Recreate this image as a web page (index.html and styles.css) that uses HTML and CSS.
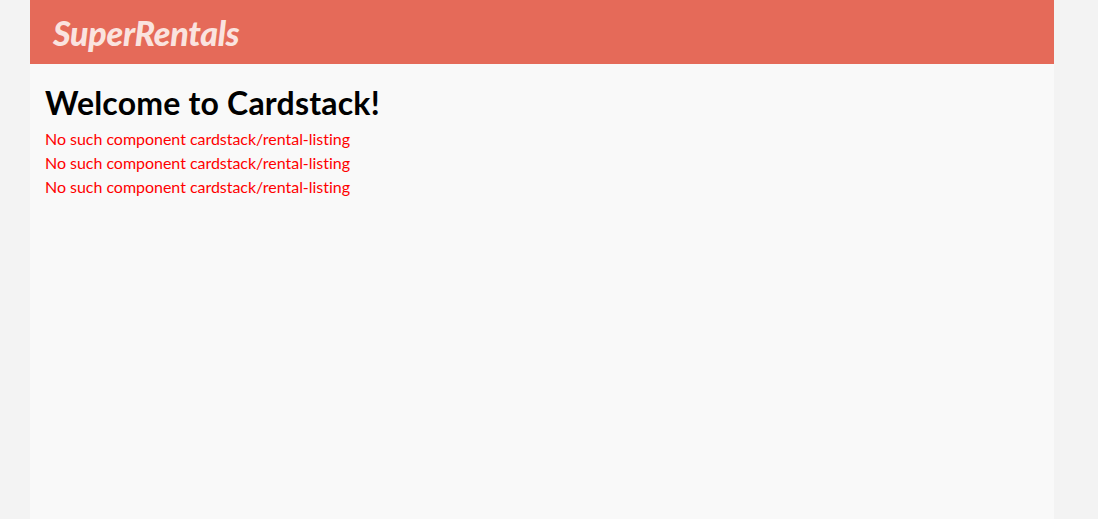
FILE: index.html
```html
<!DOCTYPE html>
<html lang="en">

<head>
    <meta charset="UTF-8">
    <title>SuperRentals</title>
    <link rel="stylesheet" href="styles.css">
</head>

<body>
    <div class="container">
        <div class="menu">
            <a class="brand" href="#">SuperRentals</a>
        </div>
        <div class="body">
            <h2>Welcome to Cardstack!</h2>
            <div class="missing">No such component cardstack/rental-listing</div>
            <div class="missing">No such component cardstack/rental-listing</div>
            <div class="missing">No such component cardstack/rental-listing</div>
        </div>
    </div>
</body>

</html>
```

FILE: styles.css
```css
html,
body {
    height: 100%;
}

body {
    margin: 0;
    overflow: hidden;
    background-color: #f3f3f3;
    font-family: Lato, sans-serif;
    font-size: 16px;
    font-variant-ligatures: none;
}

.container {
    display: flex;
    flex-direction: column;
    height: 100%;
    margin: 0 44px 0 30px;
    background-color: #f9f9f9;
}

.menu {
    height: 64px;
    padding-left: 23px;
    background-color: #e56a59;
}

.brand {
    display: block;
    line-height: 65px;
    font-size: 34px;
    font-weight: 900;
    font-style: italic;
    letter-spacing: -0.28px;
    color: #fae3df;
    text-decoration: none;
}

.body {
    padding: 19px 15px;
}

h2 {
    margin: 0 0 4px;
    font-size: 32px;
    line-height: 40px;
    font-weight: 700;
    letter-spacing: 0.2px;
    color: #000;
}

.missing {
    line-height: 24px;
    letter-spacing: -0.03px;
    color: #f00;
}
```
